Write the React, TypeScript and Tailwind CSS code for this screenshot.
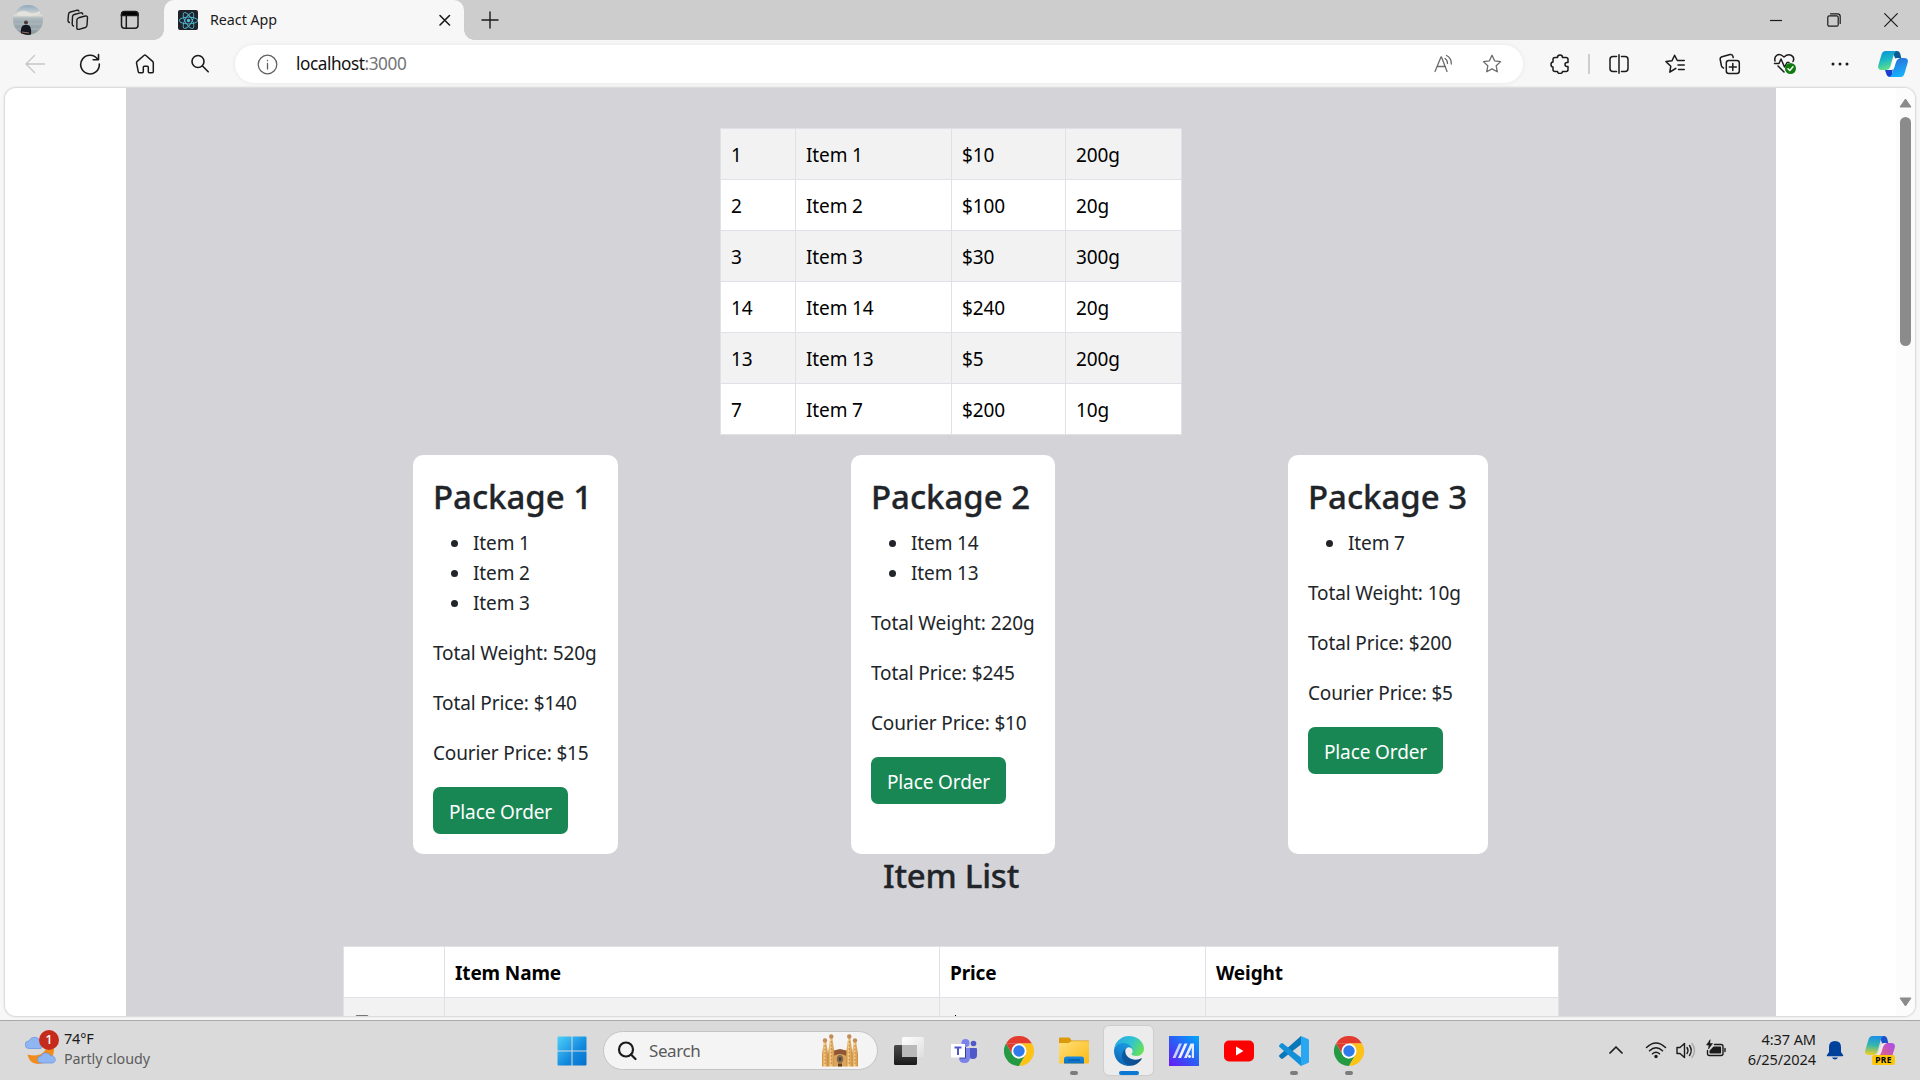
import React from "react";
import { FaReact } from "react-icons/fa";

type Kids = { children?: React.ReactNode };

/* ---------- small building blocks ---------- */

function Cell({ children }: Kids) {
  return <div className="flex h-full w-[55px] shrink-0 items-center justify-center">{children}</div>;
}

function Line({ size = 24, w = 1.3, children, color = "#1b1b1b" }: Kids & { size?: number; w?: number; color?: string }) {
  return (
    <svg width={size} height={size} viewBox={`0 0 ${size} ${size}`} fill="none" stroke={color} strokeWidth={w} strokeLinecap="round" strokeLinejoin="round">
      {children}
    </svg>
  );
}

/* ---------- browser chrome ---------- */

function Avatar() {
  return (
    <svg width="30" height="30" viewBox="0 0 30 30">
      <defs>
        <clipPath id="av"><circle cx="15" cy="15" r="15" /></clipPath>
        <linearGradient id="sky" x1="0" y1="0" x2="0" y2="1">
          <stop offset="0" stopColor="#8fa9bd" />
          <stop offset=".35" stopColor="#dcdcd6" />
          <stop offset=".45" stopColor="#a7b5ba" />
          <stop offset="1" stopColor="#8b999f" />
        </linearGradient>
      </defs>
      <g clipPath="url(#av)">
        <rect width="30" height="30" fill="url(#sky)" />
        <path d="M4 8q6-4 11-1t12-1v3q-12 3-23 1z" fill="#e8e6e0" opacity=".8" />
        <path d="M0 14h30M0 19h30M0 24h30" stroke="#b5c0c2" strokeWidth=".8" />
        <circle cx="13" cy="17.500" r="2" fill="#4a3834" />
        <path d="M8 30q-1-9 3-10h4q4 1 3 10z" fill="#15161f" />
        <path d="M9 27l7 1" stroke="#9a6f5e" strokeWidth="1.200" />
      </g>
    </svg>
  );
}

function TabStrip() {
  return (
    <div className="flex h-[40px] bg-[#cdcdcd]">
      <div className="flex w-[164px] items-center pl-[13px]">
        <Avatar />
        <div className="ml-[24px] flex">
          <Line size={22} w={1.4}>
            <path d="M11.700 8.800L18.300 7q2.200-.4 2.200 1.600L20 16.300q-.1 1.700-1.700 2.200L12 20.300q-2.200.5-2.200-1.600L9.900 11q.1-1.700 1.800-2.200z" />
            <path d="M6.500 17Q5 16.500 5.200 14.700L5.500 7.800Q5.600 6 7.300 5.500L13.300 3.900Q15.500 3.500 15.800 5" />
            <path d="M2.400 13.500Q.9 13 1 11.200L1.500 5.300Q1.700 3.500 3.400 3L9.500 1.300Q11.500 .9 11.900 2" />
          </Line>
        </div>
        <div className="ml-[31px] flex">
          <Line size={20} w={1.5}>
            <rect x="1.500" y="1.800" width="16.500" height="16.400" rx="3" />
            <path d="M1.500 5.500V4.500q0-3 3-3h10.500q3 0 3 3v1z" fill="#000" />
            <path d="M6.300 6v12" />
          </Line>
        </div>
      </div>
      <div className="relative flex h-full w-[300px] items-center rounded-t-[10px] bg-[#f7f7f7] pl-[14px]">
        <span className="absolute bottom-0 left-[-10px] size-[10px] bg-[radial-gradient(circle_at_0_0,#cdcdcd_9.500px,#f7f7f7_10px)]" />
        <span className="absolute right-[-10px] bottom-0 size-[10px] bg-[radial-gradient(circle_at_100%_0,#cdcdcd_9.500px,#f7f7f7_10px)]" />
        <span className="flex size-[20px] items-center justify-center rounded-[2px] bg-[#20232a]">
          <FaReact size={19} color="#53c1de" />
        </span>
        <span className="ml-[12px] w-[228px] text-[14.300px] leading-[20px] tracking-[-0.050px] text-[#1b1b1b]">React App</span>
        <Line size={14} w={1.6}><path d="M2 2.500l9.500 9.500M11.500 2.500L2 12" /></Line>
      </div>
      <div className="flex flex-1 items-center pl-[17px]">
        <Line size={18} w={1.4}><path d="M9 1v16M1 9h16" /></Line>
      </div>
      <div className="flex items-center">
        <div className="flex w-[58px] justify-center"><Line size={14} w={1.2}><path d="M1 7.500h12" strokeLinecap="butt" /></Line></div>
        <div className="flex w-[57px] justify-center">
          <Line size={14} w={1.2}>
            <rect x=".8" y="2.800" width="10.400" height="10.400" rx="1.500" />
            <path d="M3.500.8h7q2.700 0 2.700 2.700v7" />
          </Line>
        </div>
        <div className="flex w-[58px] justify-center"><Line size={14} w={1.2}><path d="M.7.7l12.600 12.600M13.300.7L.7 13.300" /></Line></div>
      </div>
    </div>
  );
}

function CopilotLogo() {
  return (
    <svg width="30" height="28" viewBox="0 0 30 28">
      <defs>
        <linearGradient id="cpA" x1="0" y1="0" x2=".3" y2="1"><stop offset="0" stopColor="#0a8fd6" /><stop offset=".5" stopColor="#19b5c8" /><stop offset="1" stopColor="#5ee08a" /></linearGradient>
        <linearGradient id="cpB" x1=".3" y1="0" x2=".6" y2="1"><stop offset="0" stopColor="#2a6fd8" /><stop offset="1" stopColor="#14b4ff" /></linearGradient>
      </defs>
      <path d="M14 1h5q2.500 0 3.300 3l1.200 5h-6z" fill="#0b5c94" />
      <path d="M7.500 1H19q-2 0-3 3l-3.500 12q-1 4-5 4H4q-5 0-3.600-5L3.500 4.500Q4.500 1 7.500 1z" fill="url(#cpA)" />
      <path d="M7 20h5q2 0 3-3l-1 8q-.5 2-2 2-3 0-4-4z" fill="#1a3fd0" />
      <path d="M22.500 27H11q2 0 3-3l3.500-12q1-4 5-4H26q5 0 3.600 5L26.500 23.500q-1 3.500-4 3.500z" fill="url(#cpB)" />
      <path d="M16 10q1-2 3-2h3q-3 1-4 4l-1.500 5q-1 3-3 3h-2q1.500-1 2-3z" fill="#fff" />
    </svg>
  );
}

const STAR = "M10 1.300l2.600 5.500 6 .8-4.400 4.200 1.100 6-5.300-2.900-5.300 2.900 1.100-6L1.400 7.600l6-.8z";

function Toolbar() {
  return (
    <div className="flex h-[48px] items-center bg-[#f7f7f7] pl-[7px]">
      <Cell><Line size={20} color="#c6c6c6"><path d="M19.500 10H1M9.500 1.500L1 10l8.500 8.500" /></Line></Cell>
      <Cell><Line size={22} w={1.6}><path d="M18.800 6.500A9.300 9.300 0 1 0 20.300 11M19.500 1.500v5.300h-5.300" /></Line></Cell>
      <Cell><Line size={20} w={1.5}><path d="M1.500 8.800Q1.500 8 2.200 7.400L8.900 1.500q1-.8 2 0l6.700 5.900q.7.600.7 1.400v9q0 1-1 1h-3q-1 0-1-1v-4.500q0-1-1-1h-3q-1 0-1 1v4.500q0 1-1 1h-3q-1 0-1-1z" /></Line></Cell>
      <Cell><Line size={20} w={1.6}><circle cx="8" cy="7.500" r="6" /><path d="M12.500 12l5.700 5.800" /></Line></Cell>
      <div className="ml-[8px] flex h-[38px] w-[1288px] shrink-0 items-center rounded-full bg-white pl-[22px] shadow-[0_0_5px_rgba(0,0,0,0.070)]">
        <Line size={21} color="#616161"><circle cx="10.500" cy="10.500" r="9.300" /><path d="M10.500 9.500v5.500M10.500 6.300v.4" /></Line>
        <div className="ml-[18px] flex-1 text-[17.200px] leading-[24px] tracking-[-0.450px] text-[#111]">
          localhost<span className="text-[#757575]">:3000</span>
        </div>
        <Line size={20} color="#6b6b6b"><path d="M1 17.500L7 3h.5L13 17.500M3 12.500h8.500M11 4.500q2.500 1.500 2.500 5M12.500 1.500q5 2.500 4.800 8.500" /></Line>
        <div className="mr-[21px] ml-[28px] flex"><Line size={20} color="#6b6b6b"><path d={STAR} /></Line></div>
      </div>
      <div className="ml-[8px] flex w-[57px] justify-center">
        <Line size={20} w={1.5}><path d="M5 3.500h2.500q0-2.500 2.500-2.500t2.500 2.500H16q2 0 2 2v3h-1q-2 0-2 2t2 2h1v3q0 2-2 2h-3.500q0 2-2.500 2t-2.500-2H5q-2 0-2-2v-2.500q-2 0-2-2.500t2-2.500V5.500q0-2 2-2z" /></Line>
      </div>
      <div className="h-[20px] w-[2px] bg-[#cfcfcf]" />
      <div className="flex w-[57px] justify-center"><Line size={20} w={1.5}><path d="M7.500 2.500H4q-3 0-3 3v9q0 3 3 3h3.500M12.500 2.500H16q3 0 3 3v9q0 3-3 3h-3.500M10 .8v18.400" /></Line></div>
      <Cell>
        <Line size={20} w={1.5}><path d="M13 6.500h6.300M13 11h6.300M13.500 15.500h5.800M9.800 15l-5 3.200 1-6L1 7.600l6-.8 2.600-5.500 2.700 5.200M9.800 15l1-.6" /></Line>
      </Cell>
      <Cell>
        <Line size={22} w={1.5}><rect x="7.300" y="7.500" width="13" height="13" rx="2.500" /><path d="M13.800 10.500v7M10.300 14h7M4.500 15Q3 14.500 2.500 13L1.200 6.500Q.8 4.500 3 3.800L11 1.500q2.500-.5 3 2l.2 1" /></Line>
      </Cell>
      <Cell>
        <svg width="24" height="24" viewBox="0 0 24 24" fill="none" stroke="#1b1b1b" strokeWidth="1.500" strokeLinecap="round" strokeLinejoin="round">
          <path d="M2 9Q1 5 4 3.200T11 5q4-3.500 7.500-1.500T20 9.500M1.500 11.500H6l2-4.500 3.500 8 2.500-4.500h2M5 14l6 6" />
          <circle cx="17.500" cy="16.500" r="5.500" fill="#107c10" stroke="none" />
          <path d="M15 16.700l1.800 1.800 3.200-3.700" stroke="#fff" />
        </svg>
      </Cell>
      <Cell><svg width="18" height="4"><g fill="#1b1b1b"><circle cx="2" cy="2" r="1.500" /><circle cx="9" cy="2" r="1.500" /><circle cx="16" cy="2" r="1.500" /></g></svg></Cell>
      <div className="flex w-[51px] justify-center"><CopilotLogo /></div>
    </div>
  );
}

/* ---------- page ---------- */

const SELECTED = [
  ["1", "Item 1", "$10", "200g"],
  ["2", "Item 2", "$100", "20g"],
  ["3", "Item 3", "$30", "300g"],
  ["14", "Item 14", "$240", "20g"],
  ["13", "Item 13", "$5", "200g"],
  ["7", "Item 7", "$200", "10g"],
];

function SelectedTable() {
  return (
    <div className="mt-[40px] ml-[594px] w-[462px] border-t border-l border-[#dee2e6] text-black">
      {SELECTED.map((r) => (
        <div key={r[0]} className="grid h-[51px] grid-cols-[75px_156px_114px_1fr] bg-white odd:bg-[#f2f2f2]">
          {r.map((c, i) => (
            <div key={i} className="border-r border-b border-[#dee2e6] pt-[11px] pl-[10px] leading-[30px]">{c}</div>
          ))}
        </div>
      ))}
    </div>
  );
}

function Package({ n, items, weight, price, courier, box }: { n: number; items: string[]; weight: string; price: string; courier: string; box: string }) {
  return (
    <div className={box}>
      <h2 className="mb-[8px] text-[33px] leading-[46px] font-medium tracking-[-0.050px] whitespace-nowrap [-webkit-text-stroke:0.300px_#212529]">Package {n}</h2>
      <ul className="mb-[20px] list-none">
        {items.map((t) => (
          <li key={t} className="flex h-[30px] items-center leading-[30px]">
            <span className="mr-[15px] ml-[18px] size-[7px] rounded-full bg-[#212529]" />
            {t}
          </li>
        ))}
      </ul>
      <p className="mb-[20px] leading-[30px] whitespace-nowrap">Total Weight: {weight}</p>
      <p className="mb-[20px] leading-[30px] whitespace-nowrap">Total Price: {price}</p>
      <p className="mb-[19px] leading-[30px] tracking-[-0.150px] whitespace-nowrap">Courier Price: {courier}</p>
      <button className="flex h-[47px] w-[135px] items-center justify-center rounded-[7px] bg-[#198754] pt-[3px] whitespace-nowrap text-white">Place Order</button>
    </div>
  );
}

function Page() {
  return (
    <div className="mx-[5px] flex h-[928px] overflow-hidden rounded-[11px] bg-white shadow-[0_0_2px_1px_rgba(0,0,0,0.140)]">
      <div className="ml-[121px] h-full w-[1650px] shrink-0 overflow-hidden bg-[#d4d3d8] text-[19px] tracking-[-0.120px] text-[#212529]">
        <SelectedTable />
        <div className="mt-[20px] flex h-[399px]">
          <Package n={1} items={["Item 1", "Item 2", "Item 3"]} weight="520g" price="$140" courier="$15" box="ml-[287px] w-[205px] rounded-[10px] bg-white px-[20px] pt-[19px]" />
          <Package n={2} items={["Item 14", "Item 13"]} weight="220g" price="$245" courier="$10" box="ml-[233px] w-[204px] rounded-[10px] bg-white px-[20px] pt-[19px]" />
          <Package n={3} items={["Item 7"]} weight="10g" price="$200" courier="$5" box="ml-[233px] w-[200px] rounded-[10px] bg-white px-[20px] pt-[19px]" />
        </div>
        <h2 className="mb-[48px] text-center text-[33px] leading-[44px] font-medium tracking-[-0.250px] [-webkit-text-stroke:0.300px_#212529]">Item List</h2>
        <div className="ml-[217px] w-[1216px] border-t border-l border-[#dee2e6] text-black">
          <div className="grid h-[51px] grid-cols-[101px_495px_266px_1fr] bg-white font-bold">
            {["", "Item Name", "Price", "Weight"].map((h) => (
              <div key={h} className="border-r border-b border-[#dee2e6] pt-[11px] pl-[10px] leading-[30px]">{h}</div>
            ))}
          </div>
          <div className="grid h-[18px] grid-cols-[101px_495px_266px_1fr] overflow-hidden bg-[#f2f2f2]">
            <div className="border-r border-[#dee2e6] pt-[17px] pl-[11px]"><div className="size-[14px] rounded-[2px] border border-[#767676] bg-white" /></div>
            <div className="border-r border-[#dee2e6]" />
            <div className="border-r border-[#dee2e6] pt-[17px] pl-[15px]"><div className="size-px bg-black" /></div>
            <div className="border-r border-[#dee2e6]" />
          </div>
        </div>
      </div>
      <div className="ml-auto flex w-[19px] flex-col items-center bg-[#fcfcfc]">
        <svg className="mt-[10px] shrink-0" width="13" height="10"><path d="M6.500 1L12 9H1z" fill="#8b8b8b" stroke="#8b8b8b" strokeLinejoin="round" /></svg>
        <div className="mt-[9px] h-[229px] w-[11px] shrink-0 rounded-full bg-[#8b8b8b]" />
        <svg className="mt-auto mb-[9px] shrink-0" width="13" height="10"><path d="M6.500 9L12 1H1z" fill="#8b8b8b" stroke="#8b8b8b" strokeLinejoin="round" /></svg>
      </div>
    </div>
  );
}

/* ---------- taskbar ---------- */

function Chrome() {
  return (
    <svg width="30" height="30" viewBox="0 0 30 30">
      <path d="M2 7.500A15 15 0 0 1 28 7.500H15z" fill="#e33b2e" />
      <path d="M2 7.500L8.600 18.700 15 15V7.500z" fill="#e33b2e" />
      <path d="M2 7.500L8.500 18.700q2.500 3.800 6.500 3.800l6.500-3.800L15 30A15 15 0 0 1 2 7.500z" fill="#249a45" />
      <path d="M15 7.500h13A15 15 0 0 1 15 30l6.500-11.300z" fill="#fcc316" />
      <circle cx="15" cy="15" r="7.500" fill="#fff" />
      <circle cx="15" cy="15" r="5.700" fill="#2f7bee" />
    </svg>
  );
}

function WindowsLogo() {
  return (
    <svg width="30" height="30" viewBox="0 0 30 30">
      <defs><linearGradient id="win" x1="0" y1="0" x2="1" y2="1"><stop offset="0" stopColor="#4fd0fb" /><stop offset=".6" stopColor="#1189dd" /><stop offset="1" stopColor="#0670ce" /></linearGradient></defs>
      <path d="M1.500.5H14.500V14.500H.5V1.500q0-1 1-1zM15.500.5h13q1 0 1 1v13h-14zM.5 15.500h14v14H1.500q-1 0-1-1zM15.500 15.500h14v13q0 1-1 1h-13z" fill="url(#win)" />
    </svg>
  );
}

function Cathedral() {
  return (
    <svg width="38" height="33" viewBox="0 0 38 33">
      <defs><linearGradient id="cath" x1="0" y1="0" x2="1" y2="0"><stop offset="0" stopColor="#c98a3c" /><stop offset=".4" stopColor="#f5cf86" /><stop offset="1" stopColor="#c8843a" /></linearGradient></defs>
      <path d="M10 32V17l9-2 9 2v15z" fill="#a9683a" />
      <path d="M12 18q7-5 14 0l-1 3H13z" fill="#8d5637" />
      {[[1, 7, 6], [7, 3, 6.500], [25, 3, 6.500], [31, 7, 6]].map(([x, y, w]) => (
        <g key={x}>
          <path d={`M${x + w / 2 - 1} ${y}h2L${x + w} 20V32.500H${x}V20z`} fill="url(#cath)" />
          <circle cx={x + w / 2} cy={y - 0.5} r="2.200" fill="#c48a58" />
          <path d={`M${x + w / 2} ${y + 4}V30`} stroke="#b87835" strokeWidth=".8" strokeDasharray="2 1.500" />
        </g>
      ))}
      <path d="M13 32.500V22q6-4 12 0v10.500z" fill="#d9a561" />
      <ellipse cx="19" cy="25" rx="3.300" ry="4" fill="#8b6a4a" />
      <ellipse cx="19" cy="25" rx="1.500" ry="2" fill="#4b4238" />
      <path d="M17 32.500v-3h4v3z" fill="#6b3f20" />
    </svg>
  );
}

function TaskView() {
  return (
    <svg width="32" height="30" viewBox="0 0 32 30">
      <defs>
        <linearGradient id="tvD" x1="0" y1="0" x2="0" y2="1"><stop offset="0" stopColor="#4a4a4a" /><stop offset="1" stopColor="#1a1a1a" /></linearGradient>
        <linearGradient id="tvL" x1="0" y1="0" x2="1" y2="1"><stop offset="0" stopColor="#fff" /><stop offset="1" stopColor="#dedede" /></linearGradient>
      </defs>
      <rect x="1" y="9" width="23" height="20" rx="1.500" fill="url(#tvD)" />
      <rect x="9" y="1" width="22" height="20" rx="1.500" fill="url(#tvL)" />
      <rect x="9" y="9" width="15" height="12" fill="#b9b9b9" />
    </svg>
  );
}

function Teams() {
  return (
    <svg width="28" height="26" viewBox="0 0 28 26">
      <circle cx="15.500" cy="5" r="4" fill="#7b83eb" />
      <circle cx="23.500" cy="5.500" r="2.800" fill="#5059c9" />
      <path d="M19 10h7q1 0 1 1v6q0 4-4 4t-4-3z" fill="#5059c9" />
      <path d="M9 10h11v9q0 6-5.500 6T9 20z" fill="#7b83eb" />
      <path d="M10 20h5.500V9" stroke="#3b3f88" strokeWidth="1" fill="none" />
      <rect x="1" y="6" width="14" height="13.500" fill="#fff" />
      <path d="M4.500 9.500h7M8 9.500v7.500" stroke="#5059c9" strokeWidth="2" />
    </svg>
  );
}

function Explorer() {
  return (
    <svg width="30" height="27" viewBox="0 0 30 27">
      <defs>
        <linearGradient id="fol" x1="0" y1="0" x2="1" y2="1"><stop offset="0" stopColor="#ffe07a" /><stop offset="1" stopColor="#fdb913" /></linearGradient>
        <linearGradient id="folb" x1="0" y1="0" x2="0" y2="1"><stop offset="0" stopColor="#1a8ae0" /><stop offset="1" stopColor="#0a6fc2" /></linearGradient>
      </defs>
      <path d="M0 1.500Q0 .5 1 .5h8.500q1 0 1.800 1l1.200 2H29q1 0 1 1V8H0z" fill="#dc9a0a" />
      <path d="M0 6h9.500l3-1.700H29q1 0 1 1V25.500q0 1-1 1H1q-1 0-1-1z" fill="url(#fol)" />
      <path d="M5 26.500V22q0-2.500 2.500-2.500h15Q25 19.500 25 22v4.500z" fill="url(#folb)" />
      <path d="M9 23h12" stroke="#07508f" strokeWidth="1" />
    </svg>
  );
}

function Edge() {
  return (
    <svg width="30" height="30" viewBox="0 0 256 256">
      <defs>
        <linearGradient id="eA" x1="0" y1="0" x2="1" y2="0"><stop offset="0" stopColor="#0c59a4" /><stop offset="1" stopColor="#114a8b" /></linearGradient>
        <linearGradient id="eB" x1=".7" y1="0" x2=".3" y2="1"><stop offset="0" stopColor="#1b9de2" /><stop offset=".5" stopColor="#1384d0" /><stop offset="1" stopColor="#0b5fb0" /></linearGradient>
        <linearGradient id="eC" x1="0" y1=".3" x2="1" y2=".7"><stop offset="0" stopColor="#28a8e8" /><stop offset=".5" stopColor="#2fc4d0" /><stop offset="1" stopColor="#6be350" /></linearGradient>
      </defs>
      <path d="M231 190.500c-3.400 1.800-6.900 3.400-10.500 4.700a101.900 101.900 0 0 1-35.900 6.400c-47.300 0-88.500-32.500-88.500-74.300 0-11.500 6.500-22 16.600-27.600-42.800 1.800-53.800 46.400-53.800 72.500 0 73.900 68.100 81.400 82.800 81.400 7.900 0 19.800-2.300 27-4.600l1.300-.4a128.300 128.300 0 0 0 66.600-52.800 4 4 0 0 0-5.600-5.300z" fill="url(#eA)" />
      <path d="M105.700 241.400a79.200 79.200 0 0 1-22.700-21.300 80.700 80.700 0 0 1 29.500-120c3.200-1.500 8.500-4.100 15.600-4a32.400 32.400 0 0 1 25.700 13 31.900 31.900 0 0 1 6.300 18.700c0-.2 24.500-79.600-80-79.600-43.900 0-80 41.600-80 78.200a130.200 130.200 0 0 0 12.100 56 128 128 0 0 0 156.400 67 75.500 75.500 0 0 1-62.800-8z" fill="url(#eB)" />
      <path d="M152.300 148.900c-.8 1-3.300 2.500-3.300 5.700 0 2.600 1.700 5.100 4.700 7.200 14.400 10 41.500 8.700 41.600 8.700 10.700 0 21.200-2.900 30.300-8.300a61.400 61.400 0 0 0 30.400-52.900c.3-22.400-8-37.300-11.300-43.900C223.500 23.900 177.700 0 128 0A128 128 0 0 0 0 126.200c.5-36.500 36.800-66 80-66 3.500 0 23.500.3 42 10a72.600 72.600 0 0 1 30.900 29.300c6.100 10.600 7.200 24.100 7.200 29.500s-2.700 13.300-7.800 19.900z" fill="url(#eC)" />
    </svg>
  );
}

function MyAsus() {
  return (
    <svg width="30" height="30" viewBox="0 0 30 30">
      <defs><linearGradient id="as" x1="0" y1="1" x2="1" y2="0"><stop offset="0" stopColor="#6a18f5" /><stop offset=".5" stopColor="#2b5cf5" /><stop offset="1" stopColor="#00a9fb" /></linearGradient></defs>
      <rect width="30" height="30" fill="url(#as)" />
      <path d="M3.500 22L10 7.500h3L6.500 22z" fill="#c9d0ff" />
      <path d="M9 22L15.500 7.500h3L12 22z" fill="#f0f2ff" />
      <path d="M15 22L21.500 7.500H25V22h-2.200V11.500L17.800 22z" fill="#e3ebff" />
      <circle cx="20.500" cy="20.500" r="1.400" fill="#fff" />
    </svg>
  );
}

function YouTube() {
  return (
    <svg width="30" height="22" viewBox="0 0 30 22">
      <rect y=".5" width="30" height="21" rx="5" fill="#f00" />
      <path d="M12 6.500v9l7.500-4.500z" fill="#fff" />
    </svg>
  );
}

function VSCode() {
  return (
    <svg width="30" height="30" viewBox="0 0 30 30">
      <path d="M22 0l7 3q1 .5 1 1.500v21q0 1-1 1.500l-7 3z" fill="#2aa7f2" />
      <path d="M22 0v8.500L4 22.500q-1 .8-2 0l-1.500-1.400q-1-1 0-2z" fill="#0b76b8" />
      <path d="M22 30v-8.500L4 7.500q-1-.8-2 0L.5 8.900q-1 1 0 2z" fill="#1390d8" />
    </svg>
  );
}

function AppButton({ children, mark, active }: Kids & { mark?: boolean; active?: boolean }) {
  return (
    <div className={active ? "relative flex h-[49px] w-[49px] shrink-0 items-center justify-center rounded-[5px] bg-[#ececec] shadow-[0_0_1px_1px_rgba(0,0,0,0.060)]" : "relative flex h-[49px] w-[49px] shrink-0 items-center justify-center"}>
      {children}
      {mark && <span className="absolute bottom-0 left-[21px] h-[4px] w-[8px] rounded-full bg-[#7c7c7c]" />}
      {active && <span className="absolute bottom-0 left-[15px] h-[4px] w-[20px] rounded-full bg-[#0a78d4]" />}
    </div>
  );
}

function Weather() {
  return (
    <div className="relative size-[32px]">
      <svg width="32" height="34" viewBox="0 0 32 34">
        <path d="M2.500 23.500Q16 27 21 18h8q0 12-12 14.500T2.500 23.500z" fill="#f08c1c" />
        <path d="M4 17.500a3.800 3.800 0 0 1 0-7.600 6 6 0 0 1 11 0q3 3 1 7.600z" fill="#8fb5f2" stroke="#6d97e0" strokeWidth=".8" />
        <path d="M16 32a3.500 3.500 0 0 1 0-7 5.200 5.200 0 0 1 9.500 0 3.500 3.500 0 0 1 2 7z" fill="#8fb5f2" stroke="#6d97e0" strokeWidth=".8" />
      </svg>
      <span className="absolute top-[-1px] left-[14px] flex size-[20px] items-center justify-center rounded-full bg-[#c42b1c] text-[13px] font-medium text-white">1</span>
    </div>
  );
}

function Taskbar() {
  return (
    <div className="flex h-[60px] items-center border-t border-[#a9a9a9] bg-[#dadada]">
      <div className="flex h-full w-[545px] items-center pb-[2px] pl-[25px]">
        <div className="-mt-[6px]"><Weather /></div>
        <div className="ml-[7px] leading-[20px]">
          <div className="-mt-[2px] mb-px text-[14.500px] tracking-[-0.200px] text-[#1b1b1b]">74°F</div>
          <div className="text-[14.300px] tracking-[-0.050px] text-[#5c5c5c]">Partly cloudy</div>
        </div>
      </div>
      <div className="flex w-[53px] justify-center"><WindowsLogo /></div>
      <div className="ml-[5px] flex h-[39px] w-[275px] items-center rounded-full border border-[#c4c4c4] bg-[#f4f4f4] pl-[13px]">
        <Line size={20} w={2.2}><circle cx="9" cy="8.500" r="7" /><path d="M14 13.500l4.500 4.500" /></Line>
        <span className="ml-[12px] flex-1 text-[17px] tracking-[-0.400px] text-[#5a5a5a]">Search</span>
        <span className="mr-[18px]"><Cathedral /></span>
      </div>
      <div className="ml-[6px] flex gap-[6px]">
        <AppButton><TaskView /></AppButton>
        <AppButton><Teams /></AppButton>
        <AppButton><Chrome /></AppButton>
        <AppButton mark><Explorer /></AppButton>
        <AppButton active><Edge /></AppButton>
        <AppButton><MyAsus /></AppButton>
        <AppButton><YouTube /></AppButton>
        <AppButton mark><VSCode /></AppButton>
        <AppButton mark><Chrome /></AppButton>
      </div>
      <div className="ml-auto flex h-full items-center pr-[24px] pb-[2px]">
        <Line size={14} w={1.7}><path d="M1 10l6-6 6 6" /></Line>
        <span className="ml-[22px]">
          <Line size={22} w={1.5}><path d="M1.500 8.500q9.500-9 19 0M4.500 11.700q6.500-6 13 0M7.500 14.800q3.500-3 7 0" /><circle cx="11" cy="17.500" r="1" fill="#1b1b1b" /></Line>
        </span>
        <span className="ml-[9px]">
          <Line size={20} w={1.4}><path d="M1 7.500h3l4.500-4v14l-4.500-4H1zM11 7.500q2 3 0 6M13.500 5.500q3.500 5 0 10" /><path d="M16 3.500q5 7 0 14" stroke="#a9a9a9" /></Line>
        </span>
        <span className="ml-[9px]">
          <Line size={22} w={1.4}><path d="M9.500 5.500H16q2 0 2 2v7q0 2-2 2H4.500q-2 0-2-2V11.500M20 9.500v3" /><path d="M8.800 8.200H15.400V13.800H5.200V12z" fill="#1b1b1b" /><path d="M5 1L1.500 6H4l-.5 4L7.500 4.500H5z" fill="#1b1b1b" strokeWidth=".6" /></Line>
        </span>
        <div className="ml-[9px] w-[80px] text-right text-[14.600px] leading-[20px] tracking-[-0.120px] whitespace-nowrap text-[#1b1b1b]">
          <div className="-mt-px">4:37 AM</div>
          <div>6/25/2024</div>
        </div>
        <svg className="ml-[10px]" width="18" height="20" viewBox="0 0 18 20"><path d="M9 1q6 0 6 6v5l2.200 3.300q.3 1-.7 1H1.500q-1 0-.7-1L3 12V7q0-6 6-6zM6 17.500h6q-1 2-3 2t-3-2z" fill="#00419b" /></svg>
        <div className="relative mt-[2px] ml-[21px] size-[31px]">
          <svg width="30" height="28" viewBox="0 0 30 28">
            <defs>
              <linearGradient id="tA" x1=".4" y1="0" x2=".3" y2="1"><stop offset="0" stopColor="#1a8fe8" /><stop offset=".5" stopColor="#38b8a8" /><stop offset="1" stopColor="#f5d020" /></linearGradient>
              <linearGradient id="tB" x1="1" y1="0" x2="0" y2="1"><stop offset="0" stopColor="#a94bf0" /><stop offset="1" stopColor="#f76a5a" /></linearGradient>
            </defs>
            <path d="M14 1h5q2.500 0 3.300 3l1.200 5h-6z" fill="#1c4fc8" />
            <path d="M7.500 1H19q-2 0-3 3l-3.500 12q-1 4-5 4H4q-5 0-3.600-5L3.500 4.500Q4.500 1 7.500 1z" fill="url(#tA)" />
            <path d="M22.500 27H11q2 0 3-3l3.500-12q1-4 5-4H26q5 0 3.600 5L26.500 23.500q-1 3.500-4 3.500z" fill="url(#tB)" />
            <path d="M16 10q1-2 3-2h3q-3 1-4 4l-1.500 5q-1 3-3 3h-2q1.500-1 2-3z" fill="#f3e6ea" />
          </svg>
          <span className="absolute top-[20px] left-[7px] flex h-[10px] w-[23px] items-center justify-center rounded-[2px] bg-[#fdc70c] text-[8.500px] font-bold tracking-[0.300px] text-black">PRE</span>
        </div>
      </div>
    </div>
  );
}

export default function App() {
  return (
    <div className="flex h-[1080px] w-[1920px] flex-col overflow-hidden bg-[#f7f7f7] font-['Noto_Sans','Open_Sans',sans-serif]">
      <TabStrip />
      <Toolbar />
      <Page />
      <div className="h-[4px]" />
      <Taskbar />
    </div>
  );
}
